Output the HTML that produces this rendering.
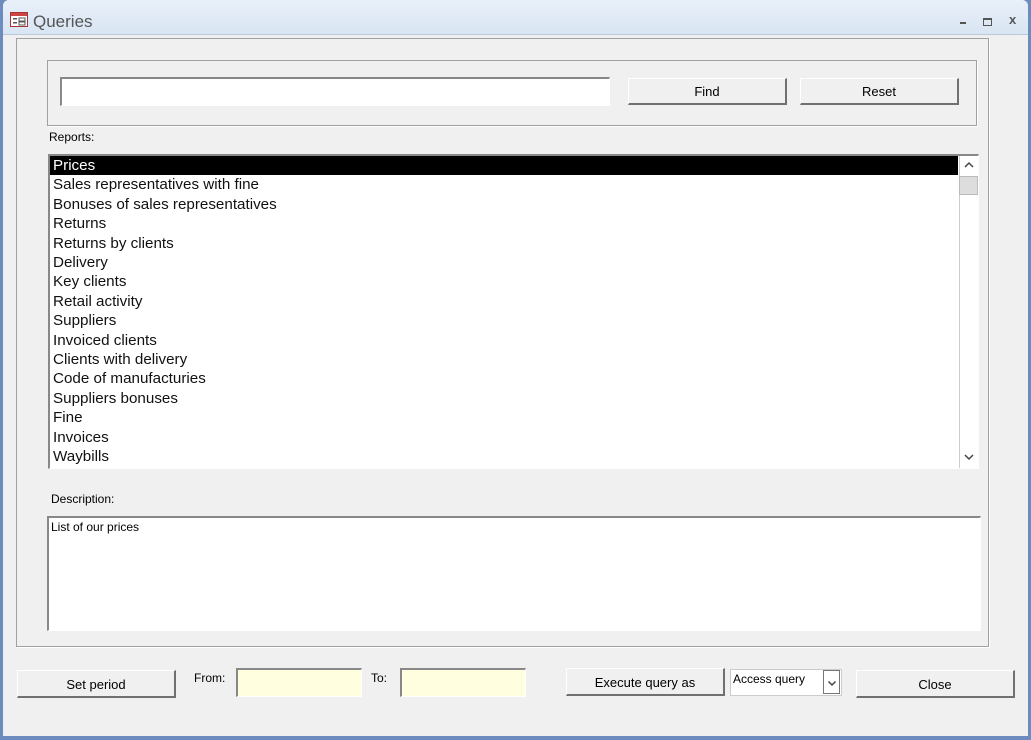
<!DOCTYPE html><html><head><style>
body{margin:0;width:1031px;height:740px;overflow:hidden;background:#6d8cbd;font-family:"Liberation Sans",sans-serif;position:relative}
.a{position:absolute}
.win{left:3px;top:0;width:1025px;height:736px;background:#f0f0f0;border-radius:6px 6px 0 0;overflow:hidden}
.tb{left:0;top:0;width:1025px;height:34px;background:linear-gradient(#e9f0f9,#d9e5f3);border-bottom:1px solid #b9c9de}
.btn{background:#f0f0f0;border:1px solid #fff;border-right:2px solid #707070;border-bottom:2px solid #707070;box-sizing:border-box;font-size:13px;text-align:center;color:#000}
.sunk{background:#fff;border:2px solid #888;border-right:1px solid #fff;border-bottom:1px solid #fff;box-sizing:border-box}
.li{position:absolute;left:3px;font-size:15.2px;height:19.4px;line-height:19.4px;color:#111}
.lbl{font-size:12px;color:#000}
</style></head><body>
<div class="a win">
<div class="a tb"></div>
<svg class="a" style="left:7px;top:12px" width="18" height="15"><rect x=".5" y=".5" width="17" height="14" fill="#fff" stroke="#a33"/><rect x="1" y="1" width="16" height="3" fill="#c44"/><rect x="3" y="6" width="4" height="1.5" fill="#555"/><rect x="3" y="10" width="4" height="1.5" fill="#555"/><rect x="9" y="6" width="6" height="3" fill="none" stroke="#555"/><rect x="9" y="10" width="6" height="3" fill="none" stroke="#555"/></svg>
<div class="a" style="left:30px;top:12px;font-size:17px;color:#555">Queries</div>
<div class="a" style="left:957px;top:22px;width:6px;height:2px;background:#555"></div>
<div class="a" style="left:980px;top:18px;width:7px;height:5px;border:1px solid #555;border-top-width:2px"></div>
<div class="a" style="left:1006px;top:12px;font-size:13px;color:#555;font-weight:bold">x</div>
<div class="a" style="left:13px;top:38px;width:971px;height:607px;border:1px solid #a0a0a0;box-shadow:1px 1px 0 #fff"></div>
<div class="a" style="left:44px;top:60px;width:928px;height:64px;border:1px solid #a0a0a0;box-shadow:1px 1px 0 #fff"></div>
<div class="a sunk" style="left:57px;top:77px;width:550px;height:29px"></div>
<div class="a btn" style="left:625px;top:78px;width:159px;height:27px;line-height:25px">Find</div>
<div class="a btn" style="left:797px;top:78px;width:159px;height:27px;line-height:25px">Reset</div>
<div class="a lbl" style="left:46px;top:130px">Reports:</div>
<div class="a sunk" style="left:45px;top:154px;width:931px;height:315px;overflow:hidden">
<div class="a" style="left:0;top:0;width:908px;height:19px;background:#000"></div>
<div class="li" style="top:0;color:#fff">Prices</div>
<div class="li" style="top:19.4px">Sales representatives with fine</div>
<div class="li" style="top:38.8px">Bonuses of sales representatives</div>
<div class="li" style="top:58.2px">Returns</div>
<div class="li" style="top:77.6px">Returns by clients</div>
<div class="li" style="top:97px">Delivery</div>
<div class="li" style="top:116.4px">Key clients</div>
<div class="li" style="top:135.8px">Retail activity</div>
<div class="li" style="top:155.2px">Suppliers</div>
<div class="li" style="top:174.6px">Invoiced clients</div>
<div class="li" style="top:194px">Clients with delivery</div>
<div class="li" style="top:213.4px">Code of manufacturies</div>
<div class="li" style="top:232.8px">Suppliers bonuses</div>
<div class="li" style="top:252.2px">Fine</div>
<div class="li" style="top:271.6px">Invoices</div>
<div class="li" style="top:291px">Waybills</div>
<div class="a" style="left:909px;top:0;width:19px;height:312px;background:#fff;border-left:1px solid #ccc"></div>
<div class="a" style="left:909px;top:20px;width:19px;height:19px;background:#ddd;border:1px solid #bbb;box-sizing:border-box"></div>
<svg class="a" style="left:913px;top:5px" width="12" height="8"><path d="M2 6L6 2L10 6" fill="none" stroke="#444" stroke-width="1.5"/></svg>
<svg class="a" style="left:913px;top:297px" width="12" height="8"><path d="M2 2L6 6L10 2" fill="none" stroke="#444" stroke-width="1.5"/></svg>
</div>
<div class="a lbl" style="left:48px;top:492px">Description:</div>
<div class="a sunk" style="left:44px;top:516px;width:934px;height:115px"><div class="a" style="left:2px;top:2px;font-size:12px">List of our prices</div></div>
<div class="a btn" style="left:14px;top:670px;width:159px;height:28px;line-height:28px">Set period</div>
<div class="a lbl" style="left:191px;top:671px">From:</div>
<div class="a sunk" style="left:233px;top:668px;width:126px;height:29px;background:#ffffe0"></div>
<div class="a lbl" style="left:368px;top:671px">To:</div>
<div class="a sunk" style="left:397px;top:668px;width:126px;height:29px;background:#ffffe0"></div>
<div class="a btn" style="left:563px;top:668px;width:159px;height:28px;line-height:27px">Execute query as</div>
<div class="a" style="left:727px;top:669px;width:112px;height:27px;background:#fff;border:1px solid #ccc;box-sizing:border-box;font-size:12px;padding:2px"><span>Access query</span></div>
<div class="a" style="left:820px;top:670px;width:17px;height:24px;border:1px solid #777;background:#fff;box-sizing:border-box"><svg style="position:absolute;left:3px;top:9px" width="10" height="7"><path d="M1.5 1.5L5 5L8.5 1.5" fill="none" stroke="#444" stroke-width="1.5"/></svg></div>
<div class="a btn" style="left:853px;top:670px;width:159px;height:28px;line-height:28px">Close</div>
</div>
</body></html>
